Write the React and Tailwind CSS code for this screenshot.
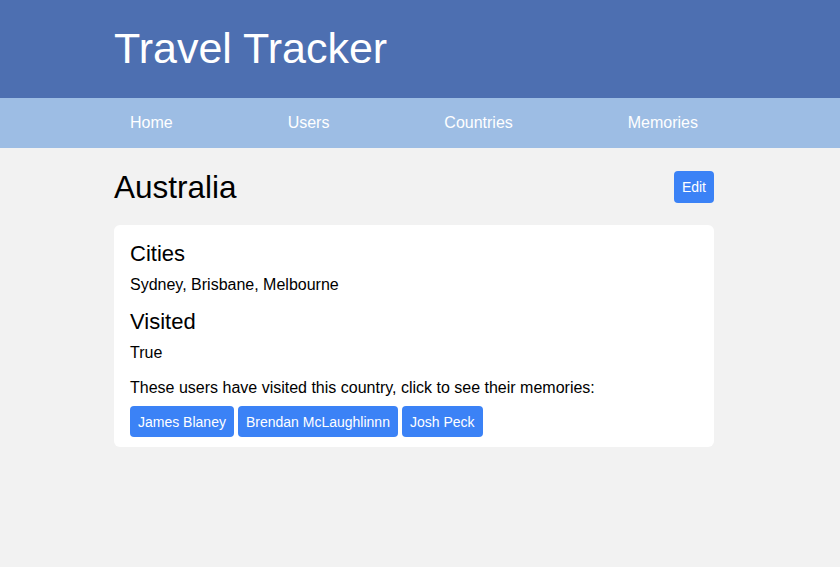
export default function App() {
  const users = ["James Blaney", "Brendan McLaughlinnn", "Josh Peck"];
  return (
    <div className="min-h-[567px] bg-[#f2f2f2] text-black" style={{ fontFamily: '"Liberation Sans", Arial, sans-serif' }}>
      <header className="bg-[#4d6fb1] h-[98px]">
        <div className="w-[600px] ml-[114px] pt-[22px]">
          <h1 className="text-[43px] leading-[52px] text-white font-normal">Travel Tracker</h1>
        </div>
      </header>
      <nav className="bg-[#9dbde4] h-[50px]">
        <div className="w-[600px] ml-[114px] px-4 flex justify-between items-center h-full text-white text-base">
          <a>Home</a>
          <a>Users</a>
          <a>Countries</a>
          <a>Memories</a>
        </div>
      </nav>
      <main className="w-[600px] ml-[114px]">
        <div className="flex justify-between items-center pt-[23px] pb-[22px]">
          <h2 className="text-[31.5px] leading-[32px]">Australia</h2>
          <button className="bg-[#3b82f6] text-white text-sm rounded h-8 px-2">Edit</button>
        </div>
        <div className="bg-white rounded-md px-4 pt-[16px] pb-[10px]">
          <h3 className="text-[22px] leading-[26px]">Cities</h3>
          <p className="mt-[8px] text-base leading-[20px]">Sydney, Brisbane, Melbourne</p>
          <h3 className="mt-[14px] text-[22px] leading-[26px]">Visited</h3>
          <p className="mt-[8px] text-base leading-[20px]">True</p>
          <p className="mt-[15px] text-base leading-[20px]">These users have visited this country, click to see their memories:</p>
          <div className="flex gap-1 mt-[8px]">
            {users.map((u) => (
              <button key={u} className="bg-[#3b82f6] text-white text-sm rounded h-[31px] px-2">{u}</button>
            ))}
          </div>
        </div>
      </main>
    </div>
  );
}
